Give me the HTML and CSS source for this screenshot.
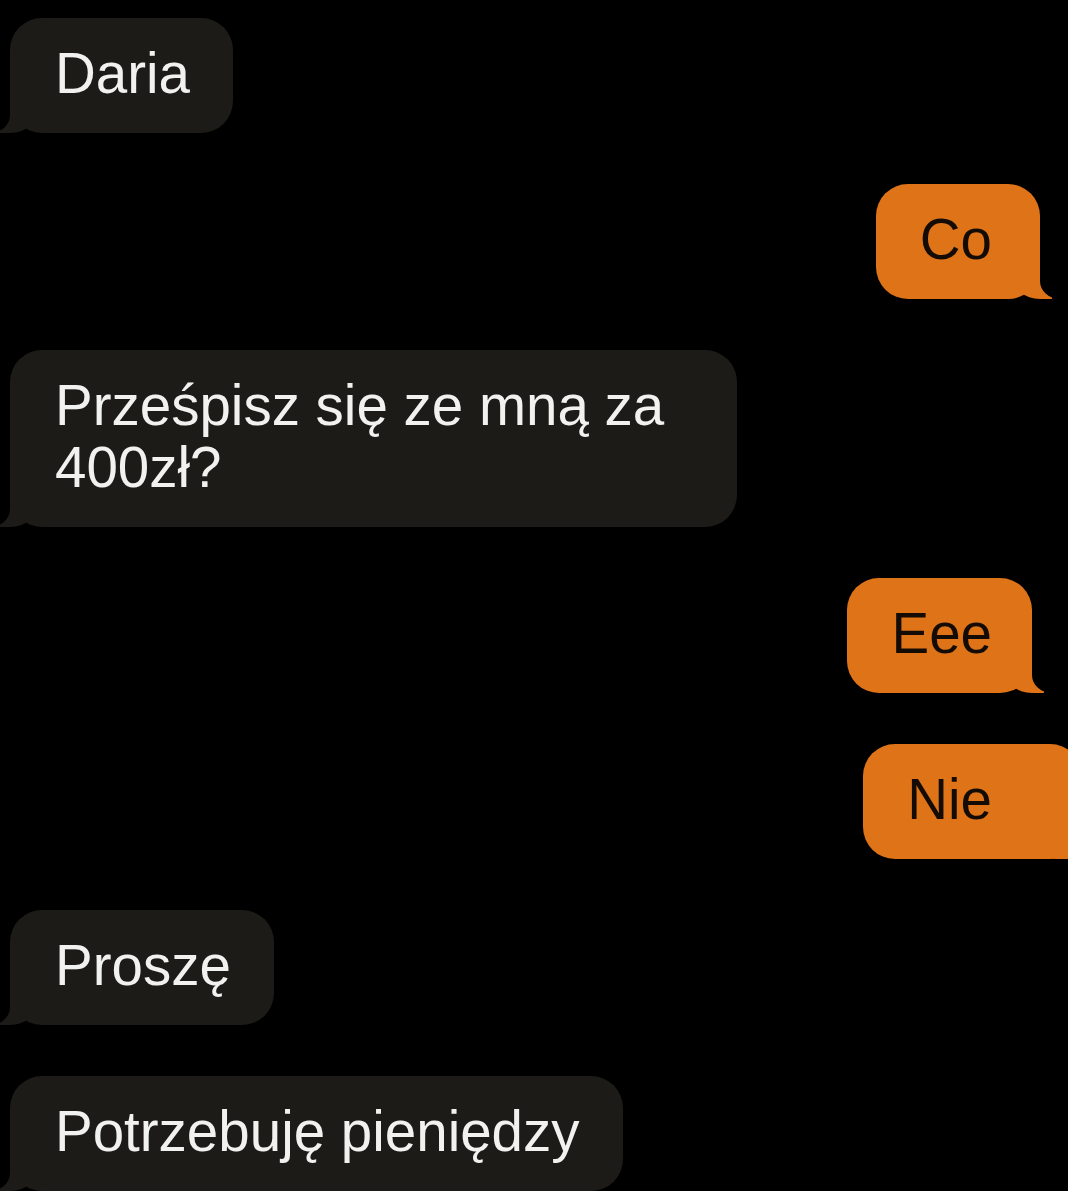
FILE: index.html
```html
<!DOCTYPE html>
<html lang="pl">
<head>
  <meta charset="UTF-8">
  <title>Daria</title>
  <link rel="stylesheet" href="styles.css">
</head>

<body>
  <div class="chat">
    <div class="msg in">Daria</div>
    <div class="msg out co">Co</div>
    <div class="msg in long">Prześpisz się ze mną za 400zł?</div>
    <div class="msg out eee">Eee</div>
    <div class="msg out wide">Nie</div>
    <div class="msg in">Proszę</div>
    <div class="msg in">Potrzebuję pieniędzy</div>
  </div>
</body>
</html>
```

FILE: styles.css
```css
body {
  margin: 0;
  background: #000000;
  font-family: 'Liberation Sans', Arial, sans-serif;
  overflow: hidden;
}

.chat {
  display: flex;
  flex-direction: column;
  gap: 51px;
  padding: 18px 0 0;
}

.msg {
  position: relative;
  box-sizing: border-box;
  font-size: 56.5px;
  line-height: 62px;
  border-radius: 32px;
  padding: 25px 43px 28px 45px;
}

.msg::before,
.msg::after {
  content: "";
  position: absolute;
  bottom: 0;
  height: 40px;
}

/* incoming */
.in {
  align-self: flex-start;
  margin-left: 10px;
  background: #1c1b17;
  color: #f1f1ef;
}

.in::before {
  left: -10px;
  width: 38px;
  background: #1c1b17;
  border-bottom-right-radius: 28px 24px;
}

.in::after {
  left: -40px;
  width: 40px;
  background: #000000;
  border-bottom-right-radius: 20px 18px;
}

.long {
  width: 727px;
}

/* outgoing */
.out {
  align-self: flex-end;
  background: #df7318;
  color: #140c04;
  padding: 25px 48px 28px 44px;
}

.out::before {
  right: -12px;
  width: 40px;
  background: #df7318;
  border-bottom-left-radius: 28px 24px;
}

.out::after {
  right: -44px;
  width: 44px;
  background: #000000;
  border-bottom-left-radius: 20px 18px;
}

.co { margin-right: 28px; }

.eee {
  margin-right: 36px;
  padding-right: 40px;
}

/* this one runs off the right edge */
.wide {
  margin-right: -14px;
  padding-right: 90px;
}

.wide::before { right: 14px; }
.wide::after { display: none; }
```
